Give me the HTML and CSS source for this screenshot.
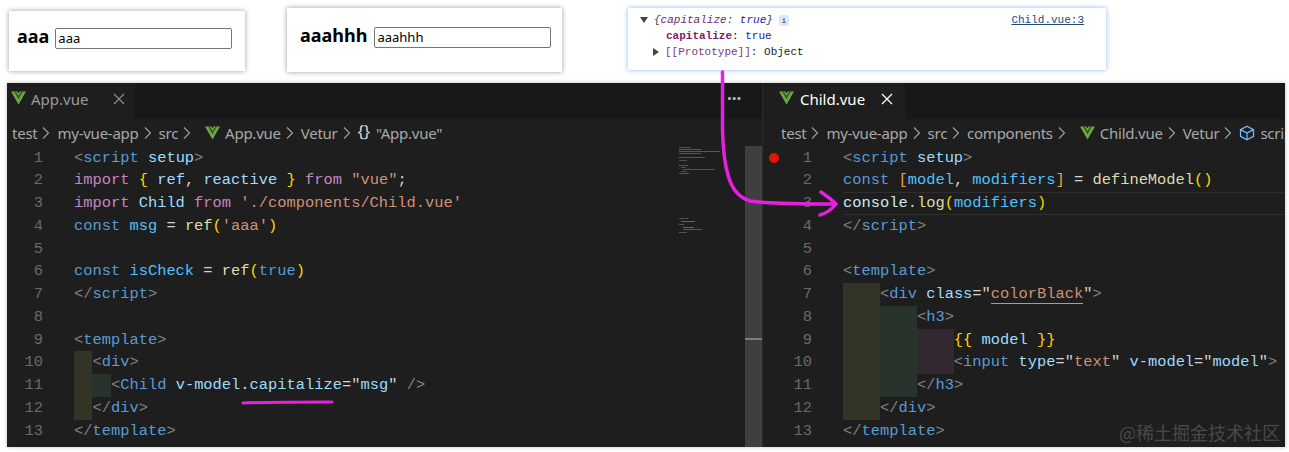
FILE: index.html
```html
<!DOCTYPE html>
<html lang="en">
<head>
<meta charset="utf-8">
<title>v-model modifiers</title>
<link rel="stylesheet" href="styles.css">
</head>
<body>
<svg class="defs" width="0" height="0" aria-hidden="true">
  <symbol id="vue" viewBox="0 0 16 14">
    <path d="M0 0H5.2L8 4.8 10.8 0H16L8 14Z" fill="#6fa83f"/>
    <path d="M3.2 0H5.4L8 4.4 10.6 0H12.8L8 8.2Z" fill="#2f5a2c"/>
    <path d="M5.4 0H6.6L8 2.4 9.4 0H10.6L8 4.4Z" fill="#8fd14f"/>
  </symbol>
  <symbol id="chev" viewBox="0 0 20 16">
    <path d="M6 2.5 11.5 8 6 13.5" fill="none" stroke="#a0a0a0" stroke-width="1.1"/>
  </symbol>
  <symbol id="close" viewBox="0 0 12 12">
    <path d="M1 1 11 11M11 1 1 11" fill="none" stroke="currentColor" stroke-width="1.3"/>
  </symbol>
</svg>

<div class="shots">
  <div class="card card-a"><h3 class="card-h">aaa</h3><input class="card-in" type="text" value="aaa"></div>
  <div class="card card-b"><h3 class="card-h">aaahhh</h3><input class="card-in" type="text" value="aaahhh"></div>
  <div class="console">
    <div class="con-text">
      <div class="con-row"><span class="tri tri-d"></span><i class="obj">{<span class="k">capitalize</span>: <span class="v">true</span>}</i><span class="info">i</span></div>
      <div class="con-row con-2"><b class="prop">capitalize</b>: <span class="v">true</span></div>
      <div class="con-row con-3"><span class="tri tri-r"></span><span class="proto">[[Prototype]]</span>: Object</div>
    </div>
    <a class="src-link">Child.vue:3</a>
  </div>
</div>

<div class="editor">
  <section class="pane pane-l">
    <div class="tabs">
      <div class="tab tab-l"><svg class="vue"><use href="#vue"/></svg><span class="tab-name">App.vue</span><svg class="x x-dim"><use href="#close"/></svg></div>
      <div class="dots">···</div>
    </div>
    <div class="crumbs crumbs-l">
      <span>test</span><svg class="chev"><use href="#chev"/></svg><span>my-vue-app</span><svg class="chev"><use href="#chev"/></svg><span>src</span><svg class="chev"><use href="#chev"/></svg><svg class="vue vue-c"><use href="#vue"/></svg><span>App.vue</span><svg class="chev"><use href="#chev"/></svg><span>Vetur</span><svg class="chev"><use href="#chev"/></svg><span class="braces">{}</span><span>"App.vue"</span>
    </div>
    <div class="body">
      <div class="code code-l">
        <div class="ln"><span class="n">1</span><span class="c"><s>&lt;</s><u>script</u> <em>setup</em><s>&gt;</s></span></div>
        <div class="ln"><span class="n">2</span><span class="c"><b>import</b> <q>{</q> <em>ref</em>, <em>reactive</em> <q>}</q> <b>from</b> <tt>"vue"</tt>;</span></div>
        <div class="ln"><span class="n">3</span><span class="c"><b>import</b> <em>Child</em> <b>from</b> <tt>'./components/Child.vue'</tt></span></div>
        <div class="ln"><span class="n">4</span><span class="c"><u>const</u> <var>msg</var> = <kbd>ref</kbd><q>(</q><tt>'aaa'</tt><q>)</q></span></div>
        <div class="ln"><span class="n">5</span><span class="c"></span></div>
        <div class="ln"><span class="n">6</span><span class="c"><u>const</u> <var>isCheck</var> = <kbd>ref</kbd><q>(</q><u>true</u><q>)</q></span></div>
        <div class="ln"><span class="n">7</span><span class="c"><s>&lt;/</s><u>script</u><s>&gt;</s></span></div>
        <div class="ln"><span class="n">8</span><span class="c"></span></div>
        <div class="ln"><span class="n">9</span><span class="c"><s>&lt;</s><u>template</u><s>&gt;</s></span></div>
        <div class="ln"><span class="n">10</span><span class="c"><span class="g gy">  </span><s>&lt;</s><u>div</u><s>&gt;</s></span></div>
        <div class="ln"><span class="n">11</span><span class="c"><span class="g gy">  </span><span class="g gg">  </span><s>&lt;</s><u>Child</u> <em>v-model</em>.<em>capitalize</em>=<tt class="w">"</tt><em>msg</em><tt class="w">"</tt> <s>/&gt;</s></span></div>
        <div class="ln"><span class="n">12</span><span class="c"><span class="g gy">  </span><s>&lt;/</s><u>div</u><s>&gt;</s></span></div>
        <div class="ln"><span class="n">13</span><span class="c"><s>&lt;/</s><u>template</u><s>&gt;</s></span></div>
      </div>
      <svg class="minimap" viewBox="0 0 67 301" aria-hidden="true">
        <g fill="#7d8790">
          <rect x="1" y="1" width="12" height="1"/><rect x="1" y="3" width="22" height="1" fill="#a58aa0"/><rect x="1" y="5" width="41" height="1" fill="#a88a7a"/><rect x="1" y="7" width="22" height="1"/><rect x="1" y="11" width="26" height="1" fill="#6f93ad"/><rect x="1" y="14" width="8" height="1"/><rect x="1" y="19" width="9" height="1" fill="#6f93ad"/><rect x="3" y="21" width="5" height="1"/><rect x="5" y="23" width="32" height="1"/><rect x="3" y="25" width="6" height="1"/><rect x="1" y="27" width="10" height="1" fill="#6f93ad"/>
          <rect x="1" y="72" width="9" height="1"/><rect x="3" y="75" width="14" height="1" fill="#b3aa8a"/><rect x="1" y="78" width="5" height="1"/><rect x="5" y="81" width="11" height="1" fill="#b3aa8a"/><rect x="5" y="83" width="19" height="1" fill="#a88a7a"/><rect x="1" y="86" width="8" height="1" fill="#6f93ad"/>
        </g>
      </svg>
      <div class="scroll"><div class="scroll-mark"></div></div>
    </div>
  </section>

  <section class="pane pane-r">
    <div class="tabs">
      <div class="tab tab-r"><svg class="vue"><use href="#vue"/></svg><span class="tab-name tab-on">Child.vue</span><svg class="x"><use href="#close"/></svg></div>
    </div>
    <div class="crumbs crumbs-r">
      <span>test</span><svg class="chev"><use href="#chev"/></svg><span>my-vue-app</span><svg class="chev"><use href="#chev"/></svg><span>src</span><svg class="chev"><use href="#chev"/></svg><span>components</span><svg class="chev"><use href="#chev"/></svg><svg class="vue vue-c"><use href="#vue"/></svg><span>Child.vue</span><svg class="chev"><use href="#chev"/></svg><span>Vetur</span><svg class="chev"><use href="#chev"/></svg><svg class="cube" viewBox="0 0 16 16"><path d="M8 1.2 14.5 4.6V11.4L8 14.8 1.5 11.4V4.6ZM1.5 4.6 8 8 14.5 4.6M8 8V14.8" fill="none" stroke="#75beff" stroke-width="1.2"/></svg><span>script</span>
    </div>
    <div class="body">
      <div class="code code-r">
        <div class="ln"><span class="n">1</span><span class="c"><s>&lt;</s><u>script</u> <em>setup</em><s>&gt;</s></span><span class="bp"></span></div>
        <div class="ln"><span class="n">2</span><span class="c"><u>const</u> <q class="o">[</q><var>model</var>, <var>modifiers</var><q class="o">]</q> = <kbd>defineModel</kbd><q>()</q></span></div>
        <div class="ln ln-cur"><span class="n">3</span><span class="c"><em class="lt">console</em>.<kbd>log</kbd><q>(</q><var>modifiers</var><q>)</q></span></div>
        <div class="ln"><span class="n">4</span><span class="c"><s>&lt;/</s><u>script</u><s>&gt;</s></span></div>
        <div class="ln"><span class="n">5</span><span class="c"></span></div>
        <div class="ln"><span class="n">6</span><span class="c"><s>&lt;</s><u>template</u><s>&gt;</s></span></div>
        <div class="ln"><span class="n">7</span><span class="c"><span class="g gy">    </span><s>&lt;</s><u>div</u> <em>class</em>=<tt class="w">"</tt><tt class="ul">colorBlack</tt><tt class="w">"</tt><s>&gt;</s></span></div>
        <div class="ln"><span class="n">8</span><span class="c"><span class="g gy">    </span><span class="g gg">    </span><s>&lt;</s><u>h3</u><s>&gt;</s></span></div>
        <div class="ln"><span class="n">9</span><span class="c"><span class="g gy">    </span><span class="g gg">    </span><span class="g gp">    </span><q>{{</q> <em>model</em> <q>}}</q></span></div>
        <div class="ln"><span class="n">10</span><span class="c"><span class="g gy">    </span><span class="g gg">    </span><span class="g gp">    </span><s>&lt;</s><u>input</u> <em>type</em>=<tt class="w">"</tt><tt>text</tt><tt class="w">"</tt> <em>v-model</em>=<tt class="w">"</tt><em>model</em><tt class="w">"</tt><s>&gt;</s></span></div>
        <div class="ln"><span class="n">11</span><span class="c"><span class="g gy">    </span><span class="g gg">    </span><s>&lt;/</s><u>h3</u><s>&gt;</s></span></div>
        <div class="ln"><span class="n">12</span><span class="c"><span class="g gy">    </span><s>&lt;/</s><u>div</u><s>&gt;</s></span></div>
        <div class="ln"><span class="n">13</span><span class="c"><s>&lt;/</s><u>template</u><s>&gt;</s></span></div>
      </div>
    </div>
  </section>
</div>

<svg class="marks" viewBox="0 0 1289 452" aria-hidden="true">
  <g fill="none" stroke="#e61fe0" stroke-linecap="round" stroke-linejoin="round">
    <path stroke-width="3.5" d="M722.5 72V130C723 150 725 165 728 175C732 190 740 198 750 201C770 204 800 204 835 204"/>
    <path stroke-width="3.5" d="M821 192C827 196 832 200 836 204C832 209 827 213 820 215"/>
    <path stroke-width="3" d="M243 403C270 402 305 402 332 402"/>
  </g>
</svg>
<div class="mark-wm">@稀土掘金技术社区</div>
</body>
</html>
```

FILE: styles.css
```css
* { box-sizing: border-box; }
html, body { margin: 0; padding: 0; }
body {
  width: 1289px;
  height: 452px;
  background: #fff;
  position: relative;
  overflow: hidden;
  font-family: "Noto Sans", "Liberation Sans", sans-serif;
}
.defs { position: absolute; }

/* top screenshots */
.shots {
  display: flex;
  align-items: flex-start;
  height: 83px;
  padding-left: 9px;
}
.card {
  display: flex;
  background: #fff;
  box-shadow: 0 0 5px rgba(0, 0, 0, .4);
}
.card-a { width: 236px; height: 60px; margin-top: 11px; padding: 17px 0 0 8px; }
.card-b { width: 275px; height: 64px; margin: 8px 0 0 42px; padding: 19px 0 0 13px; }
.card-h {
  margin: -1px 6px 0 0;
  font-size: 18px;
  font-weight: 700;
  line-height: 18px;
  color: #000;
}
.card-b .card-h { margin-right: 7px; }
.card-in {
  width: 177px;
  height: 21px;
  padding: 0 2px 1px;
  border: 1px solid #767676;
  border-radius: 2px;
  font: 13px "Noto Sans", sans-serif;
  color: #000;
  background: #fff;
}
.console {
  display: flex;
  justify-content: space-between;
  width: 478px;
  height: 62px;
  margin: 8px 0 0 66px;
  padding: 4px 22px 0 12px;
  background: #fff;
  box-shadow: 0 0 5px #8db8ee;
  font: 11px/16px "Liberation Mono", monospace;
  color: #222;
}
.con-row { display: flex; align-items: center; height: 16px; white-space: pre; }
.con-row:first-child { margin-top: 0; }
.con-2 { padding-left: 26px; }
.con-3 { padding-left: 13px; }
.tri { width: 0; height: 0; margin-right: 6px; }
.tri-d { border: 4px solid transparent; border-top: 6px solid #444; border-bottom: 0; margin-right: 6px; }
.tri-r { border: 4px solid transparent; border-left: 6px solid #444; border-right: 0; margin-right: 6px; }
.obj { color: #444; font-style: italic; white-space: pre; }
.k { color: #6e2a6e; }
.v { color: #1a1aa6; }
.info {
  width: 10px;
  height: 11px;
  margin-left: 6px;
  background: #dbe7f6;
  border-radius: 2px;
  color: #333;
  font-size: 8px;
  line-height: 11px;
  text-align: center;
}
.prop { color: #7a1b6c; font-weight: 700; }
.proto { color: #7a3b7a; }
.src-link { color: #1d4a7a; text-decoration: underline; }

/* editor */
.editor {
  display: flex;
  width: 1278px;
  height: 364px;
  margin-left: 7px;
  gap: 1px;
  background: #2a2a2a;
  box-shadow: 0 0 4px rgba(0, 0, 0, .25);
  overflow: hidden;
}
.pane {
  display: flex;
  flex-direction: column;
  background: #1e1e1e;
  color: #d4d4d4;
  overflow: hidden;
}
.pane-l { width: 755px; flex: none; }
.pane-r { flex: 1; min-width: 0; }
.tabs {
  display: flex;
  justify-content: space-between;
  height: 36px;
  flex: none;
  background: #181818;
}
.tab {
  display: flex;
  align-items: center;
  height: 36px;
  padding-bottom: 4px;
  background: #1e1e1e;
  font-size: 15px;
  color: #9a9a9a;
}
.tab-l { width: 128px; padding-left: 4px; }
.tab-r { width: 142px; padding-left: 16px; }
.vue { width: 15px; height: 14px; flex: none; margin-top: -2px; }
.tab-name { margin-left: 5px; }
.tab-on { color: #fff; margin-left: 6px; }
.x { width: 12px; height: 12px; margin-left: auto; margin-right: 10px; color: #fff; }
.tab-r .x { margin-right: 12px; }
.x-dim { color: #8a8a8a; }
.dots {
  width: 40px;
  padding-top: 3px;
  color: #b8b8b8;
  font-size: 17px;
  font-weight: 700;
  line-height: 26px;
  text-align: left;
  padding-left: 5px;
}
.crumbs {
  display: flex;
  align-items: center;
  height: 27px;
  flex: none;
  font-size: 15px;
  letter-spacing: -.25px;
  color: #a9a9a9;
  white-space: nowrap;
  overflow: hidden;
}
.crumbs-l { padding-left: 5px; }
.crumbs-r { padding-left: 18px; }
.chev { width: 20px; height: 16px; flex: none; }
.vue-c { margin: 0 5px 0 7px; }
.braces { margin-right: 6px; color: #d4d4d4; font-size: 17px; line-height: 20px; margin-top: -3px; }
.cube { width: 16px; height: 16px; margin-right: 5px; flex: none; }

.body { display: flex; flex: 1; min-height: 0; }
.code {
  flex: 1;
  min-width: 0;
  padding-top: .5px;
  font: 15.4px/22.75px "Liberation Mono", monospace;
  color: #d4d4d4;
  overflow: hidden;
}
.ln { display: flex; position: relative; height: 22.75px; white-space: pre; }
.n { flex: none; text-align: right; color: #6a6a6a; }
.code-l .n { width: 36px; margin-right: 31px; }
.code-r .n { width: 49px; margin-right: 31px; }
.c { flex: 1; min-width: 0; }
.ln-cur .c { box-shadow: inset 0 1px 0 #2e2e2e, inset 0 -1px 0 #2e2e2e; }
.bp {
  position: absolute;
  left: 6px;
  top: 6px;
  width: 10px;
  height: 10px;
  border-radius: 50%;
  background: #e51400;
}

/* tokens */
.c s { text-decoration: none; color: #808080; }
.c u { text-decoration: none; color: #569cd6; }
.c em { font-style: normal; color: #9cdcfe; }
.c b { font-weight: 400; color: #c586c0; }
.c q { quotes: none; color: #ffd700; }
.c q::before, .c q::after { content: none; }
.c q.o { color: #e8a33d; }
.c tt { font-family: inherit; color: #ce9178; }
.c tt.w { color: #d4d4d4; }
.c tt.ul { border-bottom: 1px solid #ce9178; }
.c var { font-style: normal; color: #4fc1ff; }
.c kbd { font-family: inherit; font-size: inherit; color: #dcdcaa; }
.c em.lt { color: #cfe8f2; }
.g { display: inline-block; height: 22.75px; vertical-align: top; }
.gy { background: #333326; }
.gg { background: #28332b; }
.gp { background: #32282f; }

.minimap { width: 67px; height: 301px; flex: none; opacity: .5; }
.scroll { position: relative; width: 17px; flex: none; background: #3f3f3f; }
.scroll-mark {
  position: absolute;
  left: 0;
  right: 0;
  top: 192px;
  height: 2px;
  background: #7d7d7d;
}

/* overlays */
.marks {
  position: absolute;
  left: 0;
  top: 0;
  width: 1289px;
  height: 452px;
  pointer-events: none;
}
.mark-wm {
  position: absolute;
  right: 9px;
  top: 420px;
  font: 18px/24px "Noto Sans CJK SC", "Noto Sans", sans-serif;
  color: rgba(255, 255, 255, .2);
  white-space: nowrap;
}
```
